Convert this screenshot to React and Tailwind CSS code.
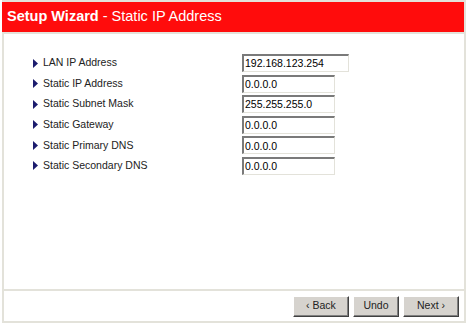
import React from "react";

const rows = [
  { label: "LAN IP Address", value: "192.168.123.254", wide: true },
  { label: "Static IP Address", value: "0.0.0.0" },
  { label: "Static Subnet Mask", value: "255.255.255.0" },
  { label: "Static Gateway", value: "0.0.0.0" },
  { label: "Static Primary DNS", value: "0.0.0.0" },
  { label: "Static Secondary DNS", value: "0.0.0.0" },
];

function Arrow() {
  return (
    <svg width="5" height="9" viewBox="0 0 5 9" className="shrink-0">
      <polygon points="0,0 5,4.5 0,9" fill="#1c1c6e" />
    </svg>
  );
}

function Btn({ children, w }) {
  return (
    <div
      className={`${w} h-[21px] flex items-center justify-center bg-[#d6d3ce] text-[10.5px] text-[#222] border-t border-l border-t-white border-l-white border-r border-b border-r-[#404040] border-b-[#404040] shadow-[inset_-1px_-1px_0_#808080]`}
    >
      {children}
    </div>
  );
}

export default function App() {
  return (
    <div
      className="w-[467px] h-[324px] bg-white relative"
      style={{ fontFamily: '"Liberation Sans", Arial, sans-serif' }}
    >
      <div className="w-[464px] h-[323px] ml-[2px] border-t-2 border-r-2 border-b-2 border-[#e3e2da] flex flex-col">
        <div className="h-[32px] bg-[#ff0c0c] flex items-center pl-[5px] text-white text-[14.5px] border-b-2 border-[#e3e2da]">
          <span className="font-bold">Setup Wizard</span>
          <span>&nbsp;- Static IP Address</span>
        </div>
        <div className="flex-1 border-l-2 border-[#e3e2da] flex flex-col">
          <div className="h-[255px] pt-[20px] flex flex-col gap-[2.6px]">
            {rows.map((r) => (
              <div key={r.label} className="h-[18px] flex items-center">
                <div className="w-[238px] flex items-center gap-[5px] pl-[29px] text-[10.5px] text-[#222]">
                  <Arrow />
                  <span>{r.label}</span>
                </div>
                <div
                  className={`${r.wide ? "w-[107px]" : "w-[93px]"} h-[18px] bg-white border-t-2 border-l-2 border-t-[#7a7a7a] border-l-[#7a7a7a] border-r border-b border-r-[#e3e2da] border-b-[#e3e2da] text-[10.5px] text-black flex items-center pl-[1px] leading-none`}
                >
                  {r.value}
                </div>
              </div>
            ))}
          </div>
          <div className="flex-1 border-t-2 border-[#e3e2da] flex items-center justify-end pr-[5px] gap-[4px]">
            <Btn w="w-[56px]">&lsaquo; Back</Btn>
            <Btn w="w-[46px]">Undo</Btn>
            <Btn w="w-[56px]">Next &rsaquo;</Btn>
          </div>
        </div>
      </div>
    </div>
  );
}
